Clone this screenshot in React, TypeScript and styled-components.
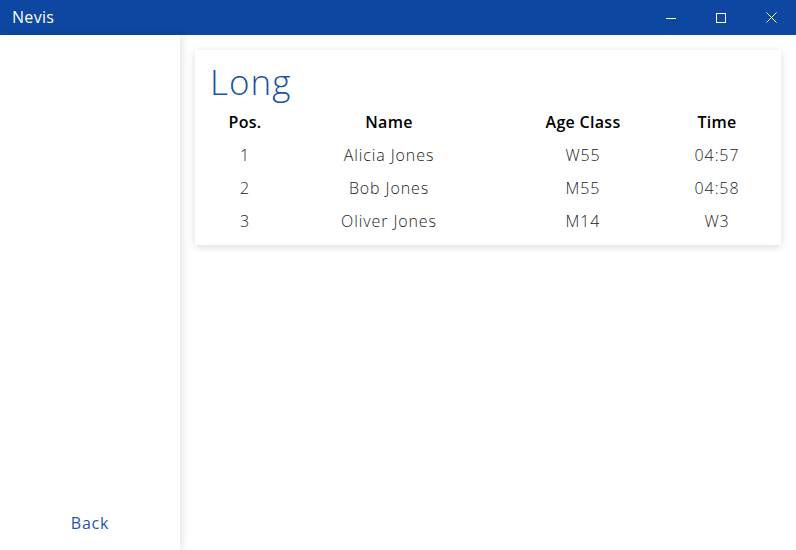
import React from "react";
import styled, { createGlobalStyle } from "styled-components";

const Global = createGlobalStyle`
  html, body { margin: 0; padding: 0; background: #fff; }
  body { font-family: "Open Sans", "Lato", sans-serif; }
  #root { height: 550px; }
`;

const Window = styled.div`
  width: 796px;
  height: 550px;
  display: flex;
  flex-direction: column;
  overflow: hidden;
`;

const TitleBar = styled.div`
  height: 35px;
  background: #0d47a1;
  color: #fff;
  display: flex;
  align-items: center;
  padding-left: 12px;
  flex-shrink: 0;
`;

const AppName = styled.div`
  font-family: "Open Sans", sans-serif;
  font-size: 16px;
  font-weight: 500;
  letter-spacing: 0.3px;
  flex: 1;
  margin-top: -2px;
`;

const Controls = styled.div`
  display: flex;
  height: 100%;
`;

const ControlBtn = styled.div`
  width: 50px;
  height: 100%;
  display: flex;
  align-items: center;
  justify-content: center;
`;

const Body = styled.div`
  flex: 1;
  display: flex;
  min-height: 0;
`;

const Sidebar = styled.div`
  width: 180px;
  flex-shrink: 0;
  background: #fff;
  box-shadow: 2px 0 8px rgba(0, 0, 0, 0.12);
  display: flex;
  flex-direction: column;
  justify-content: flex-end;
  align-items: center;
  padding-bottom: 16px;
  box-sizing: border-box;
  position: relative;
  z-index: 1;
`;

const BackLink = styled.div`
  color: #1f55ad;
  font-size: 16px;
  font-weight: 400;
  letter-spacing: 0.8px;
`;

const Main = styled.div`
  flex: 1;
  padding: 15px 15px 0 15px;
`;

const Card = styled.div`
  background: #fff;
  box-shadow: 0 2px 8px rgba(0, 0, 0, 0.14);
  padding: 9px 15px 8px 15px;
`;

const Title = styled.h1`
  margin: 0;
  color: #1a52a8;
  font-size: 35px;
  font-weight: 300;
  line-height: 46px;
  letter-spacing: 1px;
`;

const Row = styled.div<{ $head?: boolean }>`
  display: grid;
  grid-template-columns: 70px 218px 170px 1fr;
  height: 33px;
  align-items: center;
  text-align: center;
  font-size: 16px;
  letter-spacing: ${(p) => (p.$head ? "0.3px" : "0.9px")};
  font-weight: ${(p) => (p.$head ? 600 : 300)};
  color: ${(p) => (p.$head ? "#000" : "#222")};
`;

const rows = [
  ["1", "Alicia Jones", "W55", "04:57"],
  ["2", "Bob Jones", "M55", "04:58"],
  ["3", "Oliver Jones", "M14", "W3"],
];

export default function App() {
  return (
    <Window>
      <Global />
      <TitleBar>
        <AppName>Nevis</AppName>
        <Controls>
          <ControlBtn>
            <svg width="10" height="10" viewBox="0 0 10 10">
              <line x1="0" y1="5.5" x2="10" y2="5.5" stroke="#fff" strokeWidth="1" />
            </svg>
          </ControlBtn>
          <ControlBtn>
            <svg width="10" height="10" viewBox="0 0 10 10">
              <rect x="0.5" y="0.5" width="9" height="9" fill="none" stroke="#fff" strokeWidth="1" />
            </svg>
          </ControlBtn>
          <ControlBtn>
            <svg width="11" height="11" viewBox="0 0 11 11">
              <path d="M0.5 0.5 L10.5 10.5 M10.5 0.5 L0.5 10.5" stroke="#fff" strokeWidth="1" />
            </svg>
          </ControlBtn>
        </Controls>
      </TitleBar>
      <Body>
        <Sidebar>
          <BackLink>Back</BackLink>
        </Sidebar>
        <Main>
          <Card>
            <Title>Long</Title>
            <Row $head>
              <div>Pos.</div>
              <div>Name</div>
              <div>Age Class</div>
              <div>Time</div>
            </Row>
            {rows.map((r) => (
              <Row key={r[0]}>
                {r.map((c, i) => (
                  <div key={i}>{c}</div>
                ))}
              </Row>
            ))}
          </Card>
        </Main>
      </Body>
    </Window>
  );
}
